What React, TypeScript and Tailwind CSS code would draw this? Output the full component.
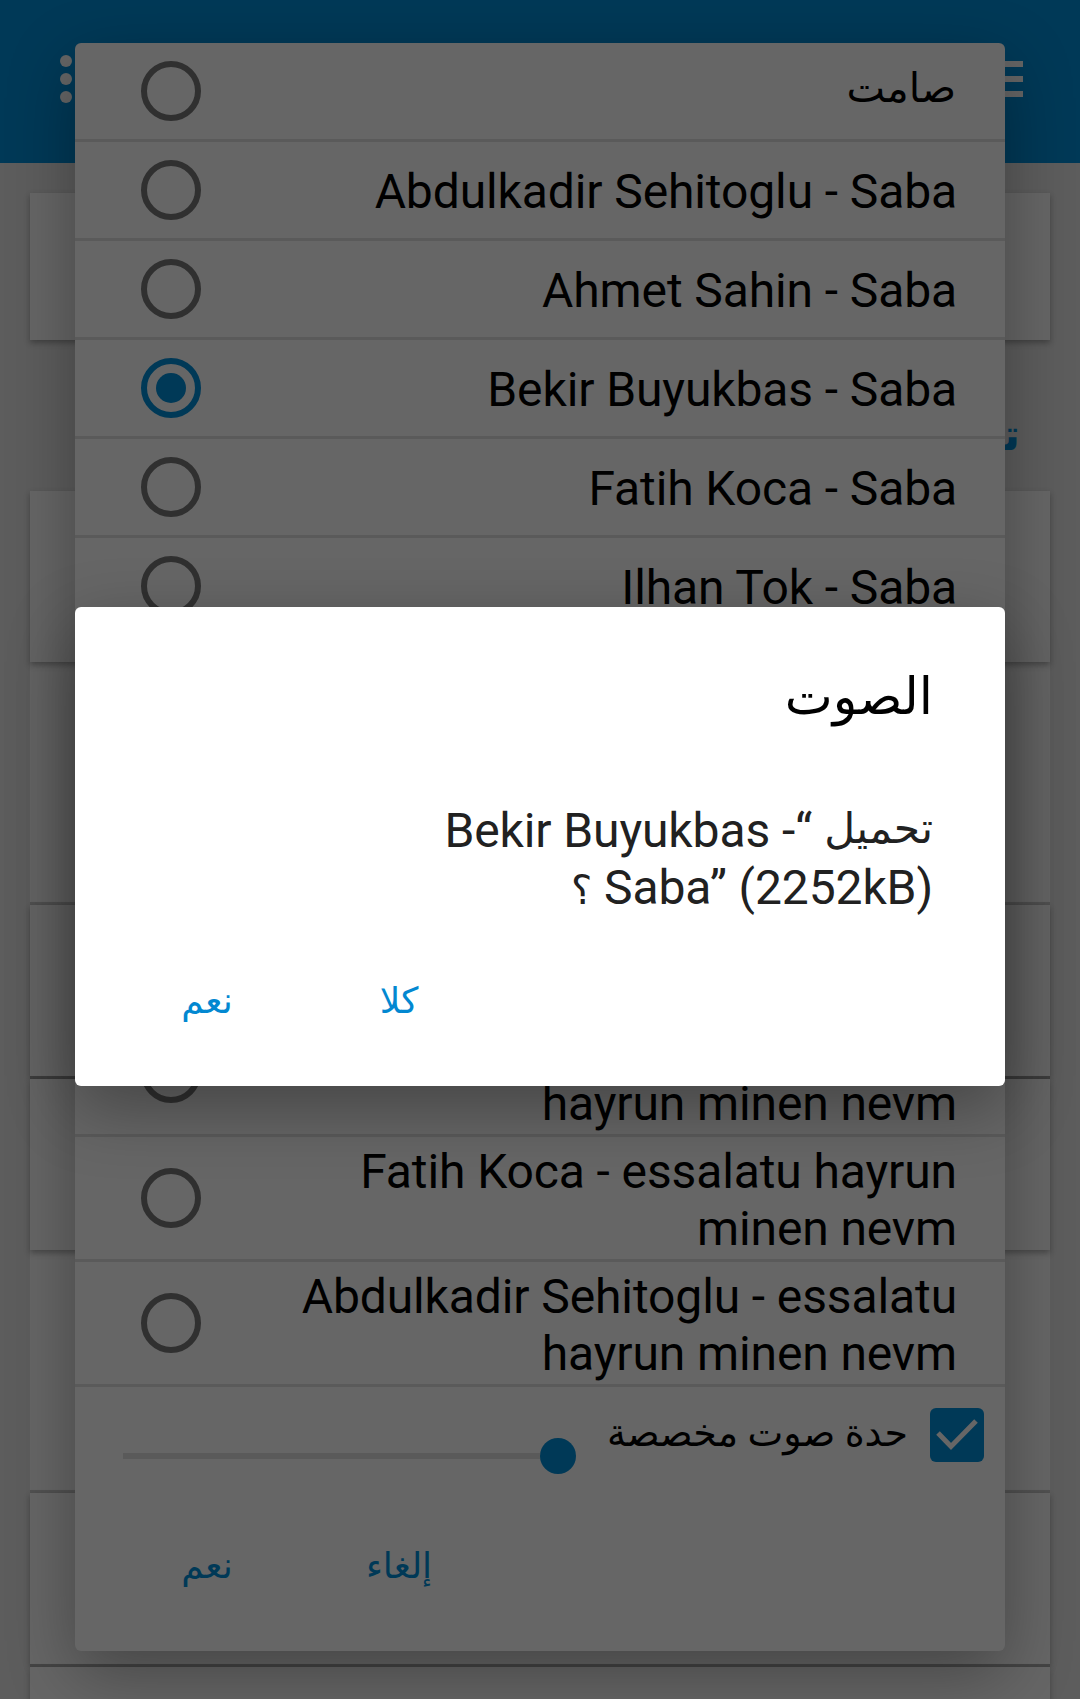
import React from 'react';

const cx = (...parts: (string | false | undefined)[]) => parts.filter(Boolean).join(' ');

function Radio({ checked }: { checked?: boolean }) {
  return (
    <span
      className={cx(
        'flex size-[60px] shrink-0 items-center justify-center rounded-full border-[6px]',
        checked ? 'border-[#003957]' : 'border-[#303030]',
      )}
    >
      {checked && <span className="size-[30px] rounded-full bg-[#003957]" />}
    </span>
  );
}

function Option({ lines, checked }: { lines: string[]; checked?: boolean }) {
  return (
    <li
      className={cx(
        'flex shrink-0 items-center justify-between border-b-[3px] border-[#5a5a5a] pr-[48px] pl-[66px]',
        lines.length > 1 ? 'h-[125px]' : 'h-[99px]',
      )}
    >
      <Radio checked={checked} />
      <div className="pt-[3px] text-right text-[48px] leading-[57px] tracking-[-0.11px] whitespace-nowrap text-black">
        {lines.map((line) => (
          <div key={line}>{line}</div>
        ))}
      </div>
    </li>
  );
}

const OPTIONS: { lines: string[]; checked?: boolean }[] = [
  { lines: ['Abdulkadir Sehitoglu - Saba'] },
  { lines: ['Ahmet Sahin - Saba'] },
  { lines: ['Bekir Buyukbas - Saba'], checked: true },
  { lines: ['Fatih Koca - Saba'] },
  { lines: ['Ilhan Tok - Saba'] },
];

const LONG_OPTIONS: { lines: string[] }[] = [
  { lines: ['Bekir Buyukbas - essalatu', 'hayrun minen nevm'] },
  { lines: ['Fatih Koca - essalatu hayrun', 'minen nevm'] },
  { lines: ['Abdulkadir Sehitoglu - essalatu', 'hayrun minen nevm'] },
];

const CARD = 'relative h-[171px] shrink-0 bg-[#666666] shadow-[0_3px_6px_rgba(0,0,0,0.3)]';

function Background() {
  return (
    <div className="flex h-full flex-col bg-[#5d5d5d]">
      <header className="flex h-[163px] shrink-0 items-start justify-between bg-[#003957] pr-[57px] pl-[60px]">
        <div className="mt-[55px] flex flex-col gap-[6px]">
          <i className="size-[12px] rounded-full bg-[#666666]" />
          <i className="size-[12px] rounded-full bg-[#666666]" />
          <i className="size-[12px] rounded-full bg-[#666666]" />
        </div>
        <div className="mt-[61px] flex w-[54px] flex-col gap-[9px]">
          <i className="h-[6px] bg-[#666666]" />
          <i className="h-[6px] bg-[#666666]" />
          <i className="h-[6px] bg-[#666666]" />
        </div>
      </header>
      <div className="flex flex-col px-[30px] pt-[30px]">
        <div className="h-[147px] shrink-0 bg-[#666666] shadow-[0_3px_6px_rgba(0,0,0,0.3)]" />
        <div dir="rtl" className="h-[151px] pt-[70px] pr-[30px] text-[44px] leading-[50px] font-bold text-[#003957]">
          تنبيه
        </div>
        <div className={cx(CARD, 'z-10')} />
        <div className="h-[240px] bg-[#666666]" />
        <div className="h-[3px] bg-[#535353]" />
        <div className={CARD} />
        <div className="relative h-[3px] bg-[#3f3f3f]" />
        <div className={cx(CARD, 'z-10')} />
        <div className="h-[240px] bg-[#666666]" />
        <div className="h-[3px] bg-[#535353]" />
        <div className={CARD} />
        <div className="relative h-[3px] bg-[#464646]" />
        <div className="relative h-[32px] bg-[#666666] shadow-[0_3px_6px_rgba(0,0,0,0.3)]" />
      </div>
    </div>
  );
}

function SoundPicker() {
  return (
    <section className="absolute top-[43px] left-[75px] z-20 flex h-[1608px] w-[930px] flex-col rounded-[6px] bg-[#666666] shadow-[0_22px_68px_rgba(0,0,0,0.33)]">
      <ul className="flex flex-col">
        <li className="flex h-[99px] items-center justify-between border-b-[3px] border-[#5a5a5a] pr-[49px] pl-[66px]">
          <Radio />
          <span dir="rtl" className="pb-[5px] text-[41px] leading-[57px] text-black">
            صامت
          </span>
        </li>
        {OPTIONS.map((o) => (
          <Option key={o.lines[0]} {...o} />
        ))}
      </ul>
      <ul className="mt-[375px] flex flex-col">
        {LONG_OPTIONS.map((o) => (
          <Option key={o.lines[0]} {...o} />
        ))}
      </ul>
      <div className="flex h-[104px] items-start pr-[21px] pl-[48px]">
        <div className="mt-[51px] flex h-[36px] w-[453px] items-center">
          <div className="h-[6px] grow bg-[#5a5a5a]" />
          <div className="size-[36px] rounded-full bg-[#003957]" />
        </div>
        <span dir="rtl" className="mt-[21px] ml-auto text-[38px] leading-[50px] whitespace-nowrap text-black">
          حدة صوت مخصصة
        </span>
        <span className="mt-[21px] ml-[22px] flex size-[54px] shrink-0 items-center justify-center rounded-[6px] bg-[#003957]">
          <svg viewBox="0 0 54 54" className="size-[54px]" fill="none" stroke="#666666" strokeWidth="5">
            <path d="M8 25 L21 38.5 L46 13" />
          </svg>
        </span>
      </div>
      <footer className="flex pt-[50px] pl-[66px] text-[36px] leading-[50px] font-medium text-[#003957]">
        <button className="w-[132px] text-center">نعم</button>
        <button className="ml-[60px] w-[132px] text-center">إلغاء</button>
      </footer>
    </section>
  );
}

function ConfirmDialog() {
  return (
    <section className="absolute top-[607px] left-[75px] z-30 h-[479px] w-[930px] rounded-[6px] bg-white pr-[72px] shadow-[0_22px_68px_rgba(0,0,0,0.33)]">
      <h1 dir="rtl" className="pt-[60px] text-[51px] leading-[60px] text-black">
        الصوت
      </h1>
      <div className="mt-[75px] text-[48px] leading-[57px] tracking-[-0.11px] text-[#212121]">
        <p dir="rtl" className="h-[57px] whitespace-nowrap">
          <span className="align-[4px] text-[42.5px] leading-[50px] tracking-normal">تحميل</span> “- Bekir Buyukbas
        </p>
        <p dir="ltr" className="text-right">
          <span className="text-[40px] leading-[50px]">؟</span> Saba” (2252kB)
        </p>
      </div>
      <footer className="flex pt-[60px] pl-[66px] text-[36px] leading-[50px] font-medium text-[#0288d1]">
        <button className="w-[132px] text-center">نعم</button>
        <button className="ml-[60px] w-[132px] text-center">كلا</button>
      </footer>
    </section>
  );
}

export default function App() {
  return (
    <main className="relative h-[1699px] w-[1080px] overflow-hidden font-[Roboto,'DejaVu_Sans',sans-serif]">
      <Background />
      <SoundPicker />
      <ConfirmDialog />
    </main>
  );
}
